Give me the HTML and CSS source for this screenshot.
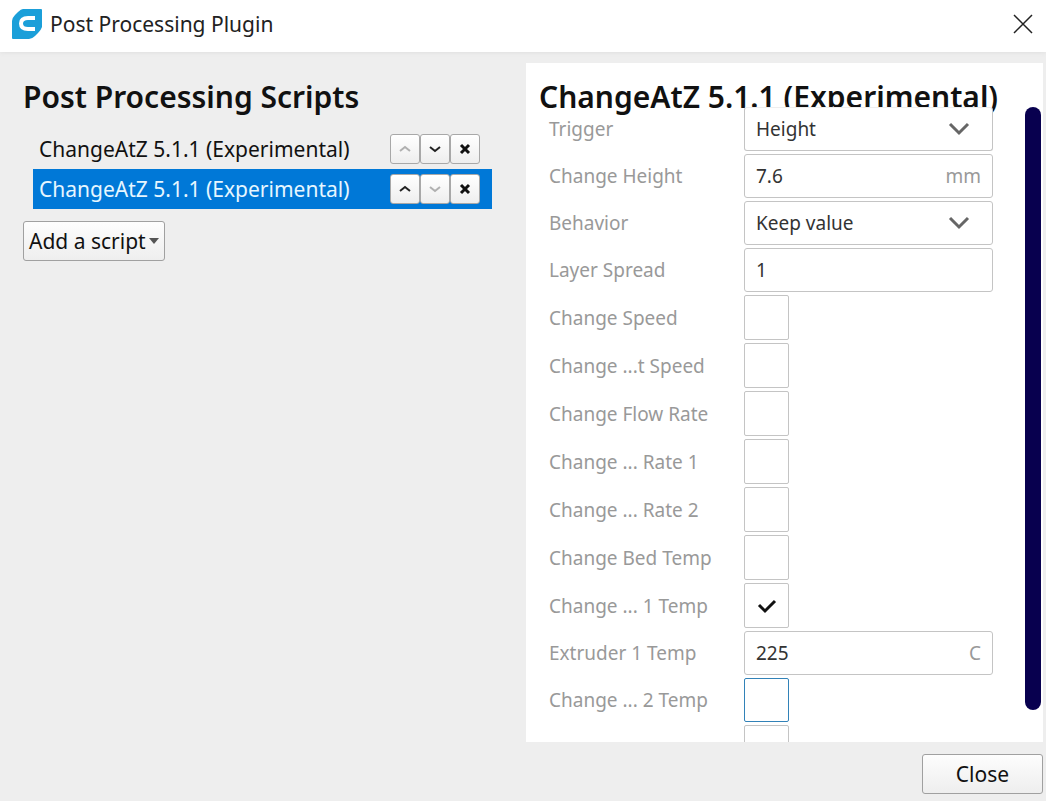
FILE: index.html
```
<!DOCTYPE html>
<html lang="en">
<head>
  <meta charset="UTF-8">
  <meta name="viewport" content="width=device-width, initial-scale=1.0">
  <title>Post Processing Plugin</title>
  <link rel="stylesheet" href="styles.css">
</head>
<body>
  <!-- Title bar -->
  <header class="title-bar">
    <svg class="app-logo" viewBox="0 0 30 30" aria-hidden="true">
      <path fill="#1b9fd9" d="M11 0H29Q30 0 30 1V18Q29 21 26 24L23 27Q20 30 17 30H1Q0 30 0 29V12Q0 9 3 6L6 3Q9 0 11 0Z"/>
      <path fill="none" stroke="#fff" stroke-width="4" d="M23 9H16C11 9 9 11 9 14.500C9 18 11 20 16 20H23"/>
    </svg>
    <span class="window-title">Post Processing Plugin</span>
    <button class="window-close" aria-label="Close window">
      <svg viewBox="0 0 20 20"><path d="M1 1L19 19M19 1L1 19"/></svg>
    </button>
  </header>

  <main class="dialog-body">
    <!-- Active scripts -->
    <section class="scripts-panel">
      <h2 class="panel-title">Post Processing Scripts</h2>
      <ul class="script-list">
        <li class="script-item">
          <button class="script-name">ChangeAtZ 5.1.1 (Experimental)</button>
          <button class="icon-btn" aria-label="Move up" disabled><svg viewBox="0 0 14 14"><path d="M2 9L7 5L12 9"/></svg></button>
          <button class="icon-btn" aria-label="Move down"><svg viewBox="0 0 14 14"><path d="M2 5L7 9L12 5"/></svg></button>
          <button class="icon-btn remove" aria-label="Remove"><svg viewBox="0 0 14 14"><path d="M3 3L11 11M11 3L3 11"/></svg></button>
        </li>
        <li class="script-item selected">
          <button class="script-name">ChangeAtZ 5.1.1 (Experimental)</button>
          <button class="icon-btn" aria-label="Move up"><svg viewBox="0 0 14 14"><path d="M2 9L7 5L12 9"/></svg></button>
          <button class="icon-btn" aria-label="Move down" disabled><svg viewBox="0 0 14 14"><path d="M2 5L7 9L12 5"/></svg></button>
          <button class="icon-btn remove" aria-label="Remove"><svg viewBox="0 0 14 14"><path d="M3 3L11 11M11 3L3 11"/></svg></button>
        </li>
      </ul>
      <button class="btn add-script">Add a script<svg class="menu-arrow" viewBox="0 0 10 6"><path d="M0 0H10L5 6Z"/></svg></button>
    </section>

    <!-- Settings of the selected script -->
    <section class="settings-panel">
      <h2 class="panel-title">ChangeAtZ 5.1.1 (Experimental)</h2>
      <div class="settings-scroll">
        <div class="settings-list">
          <div class="setting">
            <label for="trigger">Trigger</label>
            <div class="field">
              <select id="trigger"><option>Height</option><option>Layer Number</option></select>
              <svg class="chevron" viewBox="0 0 22 14"><path d="M2 2L11 11L20 2"/></svg>
            </div>
          </div>
          <div class="setting">
            <label for="height">Change Height</label>
            <div class="field">
              <input type="text" id="height" value="7.6">
              <span class="unit">mm</span>
            </div>
          </div>
          <div class="setting">
            <label for="behavior">Behavior</label>
            <div class="field">
              <select id="behavior"><option>Keep value</option><option>Single layer</option></select>
              <svg class="chevron" viewBox="0 0 22 14"><path d="M2 2L11 11L20 2"/></svg>
            </div>
          </div>
          <div class="setting">
            <label for="spread">Layer Spread</label>
            <div class="field"><input type="text" id="spread" value="1"></div>
          </div>
          <div class="setting">
            <label for="speed">Change Speed</label>
            <input type="checkbox" id="speed">
          </div>
          <div class="setting">
            <label for="printSpeed">Change ...t Speed</label>
            <input type="checkbox" id="printSpeed">
          </div>
          <div class="setting">
            <label for="flowRate">Change Flow Rate</label>
            <input type="checkbox" id="flowRate">
          </div>
          <div class="setting">
            <label for="flowRate1">Change ... Rate 1</label>
            <input type="checkbox" id="flowRate1">
          </div>
          <div class="setting">
            <label for="flowRate2">Change ... Rate 2</label>
            <input type="checkbox" id="flowRate2">
          </div>
          <div class="setting">
            <label for="bedTemp">Change Bed Temp</label>
            <input type="checkbox" id="bedTemp">
          </div>
          <div class="setting">
            <label for="changeTemp1">Change ... 1 Temp</label>
            <div class="check">
              <input type="checkbox" id="changeTemp1" checked>
              <svg class="check-mark" viewBox="0 0 20 16"><path d="M2 7L8 13L18 3"/></svg>
            </div>
          </div>
          <div class="setting">
            <label for="temp1">Extruder 1 Temp</label>
            <div class="field">
              <input type="text" id="temp1" value="225">
              <span class="unit">C</span>
            </div>
          </div>
          <div class="setting">
            <label for="changeTemp2">Change ... 2 Temp</label>
            <input type="checkbox" id="changeTemp2" class="active">
          </div>
          <div class="setting">
            <span></span>
            <input type="checkbox" aria-label="Next setting">
          </div>
        </div>
        <div class="scroll-track"><div class="scroll-thumb"></div></div>
      </div>
    </section>
  </main>

  <footer class="dialog-footer">
    <button class="btn close-btn">Close</button>
  </footer>
</body>
</html>
```
FILE: styles.css
```
* {
  margin: 0;
  padding: 0;
  box-sizing: border-box;
}

body {
  display: flex;
  flex-direction: column;
  height: 100vh;
  overflow: hidden;
  background: #eeeeee;
  color: #111111;
  font-family: 'Noto Sans', 'Open Sans', sans-serif;
  font-size: 21px;
}

button,
input,
select {
  font: inherit;
  color: inherit;
}

svg {
  display: block;
}

.title-bar {
  display: flex;
  align-items: center;
  flex: none;
  height: 52px;
  padding: 0 13px 5px 12px;
  background: #ffffff;
  box-shadow: 0 1px 4px #e0e0e0;
}

.app-logo {
  width: 30px;
  height: 30px;
  margin-right: 8px;
}

.window-title {
  flex: 1;
  color: #222222;
}

.window-close {
  border: none;
  background: none;
}

.window-close svg {
  width: 20px;
  height: 20px;
  fill: none;
  stroke: #222222;
  stroke-width: 1.5;
}

.dialog-body {
  flex: 1;
  min-height: 0;
  display: grid;
  grid-template-columns: minmax(0, 1fr) minmax(0, 1fr);
  gap: 6px;
  padding: 11px 3px 0;
}

.panel-title {
  font-size: 30px;
  font-weight: 600;
  line-height: 32px;
  white-space: nowrap;
}

/* Scripts */
.scripts-panel {
  padding: 18px 28px 0 20px;
}

.script-list {
  list-style: none;
  margin: 16px 0 12px 10px;
}

.script-item {
  display: flex;
  align-items: center;
  height: 40px;
  padding: 0 12px 0 6px;
}

.script-item.selected {
  background: #0078d7;
}

.script-item.selected .script-name {
  color: #e6f6ff;
}

.script-name {
  flex: 1;
  border: none;
  background: none;
  text-align: left;
  white-space: nowrap;
}

.icon-btn {
  display: flex;
  align-items: center;
  justify-content: center;
  width: 30px;
  height: 30px;
  border: 1px solid #a8a8a8;
  border-radius: 3px;
  background: linear-gradient(#ffffff, #eeeeee);
}

.icon-btn svg {
  width: 14px;
  height: 14px;
  fill: none;
  stroke: #222222;
  stroke-width: 2;
}

.icon-btn.remove svg {
  stroke: #111111;
  stroke-width: 3;
}

.icon-btn:disabled svg {
  stroke: #b0b0b0;
}

.btn {
  height: 40px;
  border: 1px solid #a0a0a0;
  border-radius: 3px;
  background: linear-gradient(#fdfdfd, #eeeeee);
}

.add-script {
  display: flex;
  align-items: center;
  gap: 3px;
  padding: 0 5px;
}

.menu-arrow {
  width: 10px;
  height: 6px;
  fill: #555555;
}

/* Settings */
.settings-panel {
  display: flex;
  flex-direction: column;
  min-height: 0;
  padding: 18px 2px 0 13px;
  background: #ffffff;
}

.settings-panel .panel-title {
  height: 26px;
  flex: none;
}

.settings-scroll {
  flex: 1;
  min-height: 0;
  display: flex;
  gap: 32px;
  overflow: hidden;
}

.settings-list {
  flex: 1;
  min-width: 0;
  display: flex;
  flex-direction: column;
  gap: 3px;
  padding-left: 10px;
  font-size: 19px;
}

.setting {
  display: grid;
  grid-template-columns: 195px minmax(0, 1fr);
  align-items: center;
  flex: none;
}

.setting label {
  color: #999999;
}

.field {
  display: flex;
  align-items: center;
  height: 44px;
  padding-right: 11px;
  border: 1px solid #c4c4c4;
  border-radius: 3px;
  background: #ffffff;
  color: #333333;
}

/* The list is scrolled just past the top edge of its first field */
.setting:first-child .field {
  border-top-color: #eeeeee;
}

.field input,
.field select {
  flex: 1;
  min-width: 0;
  height: 100%;
  padding-left: 11px;
  border: none;
  outline: none;
  background: none;
  appearance: none;
}

.unit {
  color: #999999;
}

.chevron {
  width: 22px;
  height: 14px;
  margin-right: 11px;
  fill: none;
  stroke: #666666;
  stroke-width: 3;
  pointer-events: none;
}

input[type="checkbox"] {
  display: block;
  width: 45px;
  height: 45px;
  border: 1px solid #c4c4c4;
  border-radius: 2px;
  background: #ffffff;
  appearance: none;
}

input[type="checkbox"].active {
  height: 44px;
  border-color: #3282b8;
}

.check {
  display: grid;
  place-items: center;
  width: 45px;
}

.check > * {
  grid-area: 1 / 1;
}

.check-mark {
  width: 20px;
  height: 16px;
  fill: none;
  stroke: #111111;
  stroke-width: 3;
  pointer-events: none;
  visibility: hidden;
}

.check input:checked + .check-mark {
  visibility: visible;
}

.scroll-track {
  flex: none;
  width: 16px;
}

.scroll-thumb {
  height: 95%;
  border-radius: 8px;
  background: #08004f;
}

/* Footer */
.dialog-footer {
  display: flex;
  justify-content: flex-end;
  flex: none;
  padding: 12px 3px 7px;
}

.close-btn {
  width: 121px;
}
```
